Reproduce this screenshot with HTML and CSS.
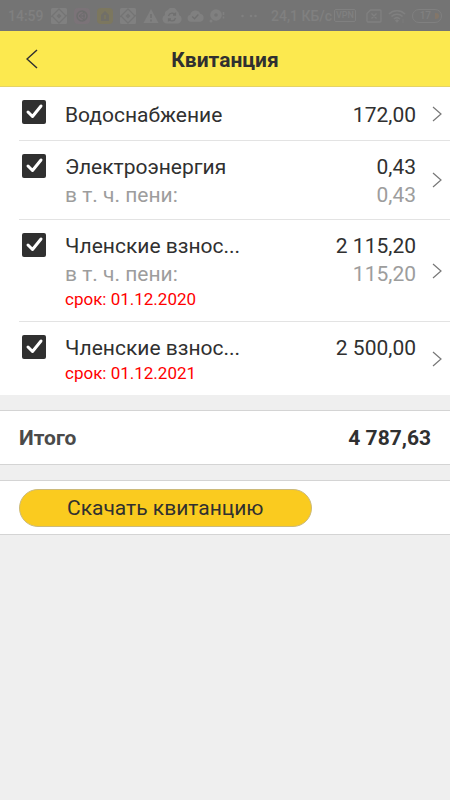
FILE: index.html
```html
<!DOCTYPE html>
<html lang="ru">
<head>
<meta charset="utf-8">
<meta name="viewport" content="width=device-width, initial-scale=1">
<title>Квитанция</title>
<link rel="stylesheet" href="styles.css">
</head>
<body>
<svg class="defs" aria-hidden="true">
  <symbol id="chevron" viewBox="0 0 10 18"><path d="M1 2l8 7-8 7" fill="none" stroke="currentColor" stroke-width="1.2"/></symbol>
  <symbol id="puzzle" viewBox="0 0 16 16">
    <path d="M1.500 0h13A1.500 1.500 0 0 1 16 1.500v13a1.500 1.500 0 0 1-1.500 1.500h-13A1.500 1.500 0 0 1 0 14.500v-13A1.500 1.500 0 0 1 1.500 0z" fill="currentColor"/>
    <path d="M0 9l8-8 7 7M16 7l-8 8-7-7" fill="none" stroke="#747474" stroke-width="1.300"/>
    <path d="M8 5.500l2.500 2.500L8 10.500 5.500 8z" fill="#747474"/>
  </symbol>
</svg>
<div class="status">
  <span class="clock">14:59</span>
  <div class="notices" aria-hidden="true">
    <svg width="16" height="16"><use href="#puzzle"/></svg>
    <svg class="pink" width="16" height="16" viewBox="0 0 16 16"><rect width="16" height="16" rx="4" fill="currentColor"/><circle cx="8" cy="8" r="5" fill="none" stroke="#6d6d6d" stroke-width="1.500"/><path d="M10 4L5 8l5 4zM5 8h6" fill="none" stroke="#6d6d6d"/></svg>
    <svg class="gold" width="16" height="16" viewBox="0 0 16 16"><rect width="16" height="16" rx="4" fill="currentColor"/><path d="M4 7l4-4 4 4v6H4z" fill="#716f68"/><path d="M8 7v4" stroke="#7a765f" stroke-width="2"/></svg>
    <svg width="16" height="16"><use href="#puzzle"/></svg>
    <svg width="16" height="16" viewBox="0 0 16 16"><path d="M8 1l7.500 14H.5z" fill="currentColor"/><path d="M8 6v4M8 11.500v2" stroke="#707070" stroke-width="1.500"/></svg>
  </div>
  <div class="notices clouds" aria-hidden="true">
    <svg width="20" height="16" viewBox="0 0 20 16"><path d="M5 15.500a4.500 4.500 0 0 1-2-8.500 4 4 0 0 1 3-5 5 5 0 0 1 9 1 4 4 0 0 1 2 4 4.500 4.500 0 0 1-1 8.500z" fill="currentColor"/><path d="M6.500 8a3.800 3.800 0 0 1 7-1M13.500 4.500V7H11M13.500 10a3.800 3.800 0 0 1-7 1M6.500 13.500V11H9" fill="none" stroke="#707070" stroke-width="1.300"/></svg>
    <svg width="17" height="16" viewBox="0 0 18 16"><path d="M4 14a3.700 3.700 0 0 1-.5-7.300 5.500 5.500 0 0 1 10.500-1A4.200 4.200 0 0 1 14 14z" fill="currentColor"/><path d="M5.500 8.500l2.500 2.500 4-4.500" fill="none" stroke="#707070" stroke-width="1.500"/></svg>
    <svg width="16" height="16" viewBox="0 0 16 16"><circle cx="7" cy="7" r="3.800" fill="none" stroke="currentColor" stroke-width="4"/><circle cx="2" cy="13" r="1.500" fill="currentColor"/><path d="M14.500 4v3M14.500 8.500v2" stroke="currentColor" stroke-width="1.500"/></svg>
  </div>
  <svg class="dots" width="16" height="16" viewBox="0 0 16 16" aria-hidden="true"><g fill="currentColor"><circle cx="1.500" cy="8" r="1.300"/><circle cx="10" cy="8" r="1.300"/><circle cx="14.500" cy="8" r="1.300"/></g></svg>
  <div class="system">
    <span class="speed">24,1 КБ/с</span>
    <span class="vpn">VPN</span>
    <svg class="sim" width="16" height="14" viewBox="0 0 16 14"><path d="M4.500 1H14a1 1 0 0 1 1 1v10a1 1 0 0 1-1 1H2a1 1 0 0 1-1-1V4.500zM5.500 4.500l5 5M10.500 4.500l-5 5" fill="none" stroke="currentColor" stroke-width="1.300"/></svg>
    <svg width="18" height="14" viewBox="0 0 18 14"><path d="M1 5a11.500 11.500 0 0 1 16 0M3.500 7.500a8 8 0 0 1 11 0M6 10a4.500 4.500 0 0 1 6 0" fill="none" stroke="currentColor" stroke-width="1.600"/><path d="M7.300 11.500L9 13.500l1.700-2A2.500 2.500 0 0 0 7.300 11.500zM15 10v4" fill="currentColor" stroke="currentColor" stroke-width=".7"/></svg>
    <span class="battery">17<i></i></span>
  </div>
</div>
<header class="bar">
  <button class="back" type="button" aria-label="Назад"><svg width="12" height="20" viewBox="0 0 12 20"><path d="M11 1L1 10l10 9" fill="none" stroke="currentColor" stroke-width="1.500"/></svg></button>
  <h1>Квитанция</h1>
</header>
<main>
  <ul class="list">
    <li class="row">
      <input class="check" type="checkbox" id="c1" checked>
      <div class="body">
        <div class="line"><label for="c1">Водоснабжение</label><span>172,00</span></div>
      </div>
      <a class="more" href="#" aria-label="Подробнее"><svg width="10" height="18"><use href="#chevron"/></svg></a>
    </li>
    <li class="row">
      <input class="check" type="checkbox" id="c2" checked>
      <div class="body">
        <div class="line"><label for="c2">Электроэнергия</label><span>0,43</span></div>
        <div class="line fine"><span>в т. ч. пени:</span><span>0,43</span></div>
      </div>
      <a class="more" href="#" aria-label="Подробнее"><svg width="10" height="18"><use href="#chevron"/></svg></a>
    </li>
    <li class="row">
      <input class="check" type="checkbox" id="c3" checked>
      <div class="body">
        <div class="line"><label for="c3">Членские взнос...</label><span>2 115,20</span></div>
        <div class="line fine"><span>в т. ч. пени:</span><span>115,20</span></div>
        <div class="due">срок: 01.12.2020</div>
      </div>
      <a class="more" href="#" aria-label="Подробнее"><svg width="10" height="18"><use href="#chevron"/></svg></a>
    </li>
    <li class="row">
      <input class="check" type="checkbox" id="c4" checked>
      <div class="body">
        <div class="line"><label for="c4">Членские взнос...</label><span>2 500,00</span></div>
        <div class="due">срок: 01.12.2021</div>
      </div>
      <a class="more" href="#" aria-label="Подробнее"><svg width="10" height="18"><use href="#chevron"/></svg></a>
    </li>
  </ul>
  <section class="panel total"><span class="total-name">Итого</span><span>4 787,63</span></section>
  <section class="panel"><button class="download" type="button">Скачать квитанцию</button></section>
</main>
</body>
</html>
```

FILE: styles.css
```css
* { box-sizing: border-box; }

body {
  margin: 0;
  min-height: 100vh;
  background: #efefef;
  color: #303030;
  font-family: Roboto, "Noto Sans", sans-serif;
  font-size: 21px;
  line-height: 28px;
}

.defs { position: absolute; width: 0; height: 0; }
svg { display: block; flex: none; }

.status {
  display: flex;
  align-items: center;
  height: 31px;
  padding: 0 8px;
  background: #747474;
  color: #808080;
  font-size: 14px;
  font-weight: 500;
  line-height: 16px;
}
.notices { display: flex; align-items: center; gap: 7px; margin-left: 7px; }
.clouds { gap: 5px; margin-left: 3px; }
.pink { color: #7b7378; }
.gold { color: #7c775f; }
.dots { margin-left: 16px; }
.system { display: flex; align-items: center; gap: 6px; margin-left: auto; }
.speed { white-space: nowrap; }
.vpn {
  margin-left: -4px;
  padding: 0 1px;
  border: 1px solid;
  border-radius: 2px;
  font-size: 9px;
  line-height: 11px;
}
.sim { margin-left: 4px; }
.battery {
  display: flex;
  align-items: center;
  justify-content: flex-end;
  gap: 4px;
  width: 30px;
  height: 14px;
  padding-right: 2px;
  border: 1px solid;
  border-radius: 7px;
  font-size: 10px;
}
.battery i { width: 4px; height: 6px; border-radius: 0 3px 3px 0; background: #837669; }

.bar {
  display: grid;
  grid-template-columns: 64px 1fr 64px;
  align-items: center;
  height: 56px;
  background: #fce94f;
  border-bottom: 1px solid #e5d366;
}
.back {
  display: flex;
  align-items: center;
  justify-content: center;
  height: 55px;
  padding: 0;
  border: 0;
  background: none;
  color: #303030;
}
h1 {
  margin: 0;
  padding-top: 3px;
  font-size: 21px;
  font-weight: 700;
  line-height: 28px;
  text-align: center;
}

.list { margin: 0; padding: 0 0 0 19px; list-style: none; background: #fff; }
.row {
  display: flex;
  align-items: center;
  min-height: 54px;
  padding-left: 3px;
  border-bottom: 1px solid #e3e3e3;
}
.row:last-child { border-bottom: 0; }
.check {
  appearance: none;
  align-self: flex-start;
  flex: none;
  width: 24px;
  height: 24px;
  margin: 13px 19px 0 0;
  border-radius: 2px;
  background: #303030;
}
.check:checked {
  background: #303030 url("data:image/svg+xml,%3Csvg xmlns='http://www.w3.org/2000/svg' viewBox='0 0 24 24'%3E%3Cpath d='M6 12l4.500 4.500L19 6' fill='none' stroke='white' stroke-width='3' stroke-linecap='round' stroke-linejoin='round'/%3E%3C/svg%3E") center / 24px;
}
.body { flex: 1; min-width: 0; padding: 12px 0 10px; }
.line { display: flex; justify-content: space-between; white-space: nowrap; }
.fine { color: #9d9d9d; }
.due { color: #f00; font-size: 17px; line-height: 23px; }
.more { padding: 4px 8px 4px 16px; color: #777; }

.panel {
  display: flex;
  align-items: center;
  min-height: 55px;
  margin-top: 15px;
  padding: 0 19px;
  background: #fff;
  border: solid #d4d4d4;
  border-width: 1px 0;
}
.total { justify-content: space-between; font-weight: 700; }
.total-name { color: #4a4a4a; }
.download {
  width: 71%;
  height: 38px;
  padding: 0;
  border: 1px solid #ccba7a;
  border-radius: 19px;
  background: #facb1f;
  color: #303030;
  font: inherit;
}
```
